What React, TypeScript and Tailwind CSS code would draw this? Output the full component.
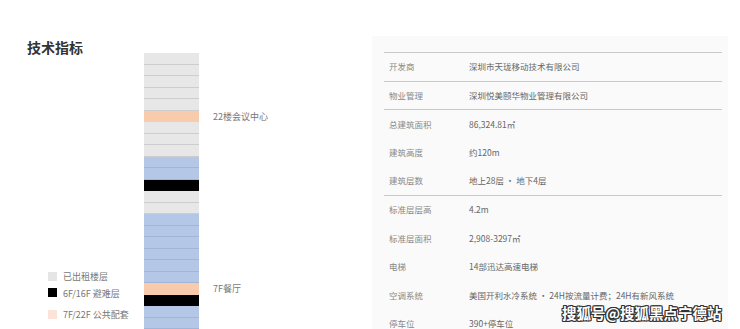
import React from "react"

type Floor = { kind: "grey" | "orange" | "blue" | "black"; label?: string }

const floors: Floor[] = [
  { kind: "grey" },
  { kind: "grey" },
  { kind: "grey" },
  { kind: "grey" },
  { kind: "grey" },
  { kind: "orange", label: "22楼会议中心" },
  { kind: "grey" },
  { kind: "grey" },
  { kind: "grey" },
  { kind: "blue" },
  { kind: "blue" },
  { kind: "black" },
  { kind: "grey" },
  { kind: "grey" },
  { kind: "blue" },
  { kind: "blue" },
  { kind: "blue" },
  { kind: "blue" },
  { kind: "blue" },
  { kind: "blue" },
  { kind: "orange", label: "7F餐厅" },
  { kind: "black" },
  { kind: "blue" },
  { kind: "blue" },
  { kind: "blue" },
]

const floorStyles = {
  grey: "bg-[#e7e7e7] border-[#cdcdcd]",
  orange: "bg-[#f8cbad] border-[#f8cbad]",
  blue: "bg-[#b4c7e7] border-[#a2b5d6]",
  black: "bg-black border-black",
}

const specs = [
  { label: "开发商", value: "深圳市天珑移动技术有限公司", line: true },
  { label: "物业管理", value: "深圳悦美颐华物业管理有限公司", line: true },
  { label: "总建筑面积", value: "86,324.81㎡" },
  { label: "建筑高度", value: "约120m" },
  { label: "建筑层数", value: "地上28层 · 地下4层", line: true },
  { label: "标准层层高", value: "4.2m" },
  { label: "标准层面积", value: "2,908-3297㎡" },
  { label: "电梯", value: "14部迅达高速电梯" },
  { label: "空调系统", value: "美国开利水冷系统 · 24H按流量计费；24H有新风系统" },
  { label: "停车位", value: "390+停车位" },
]

export default function App() {
  return (
    <div
      className="relative flex w-[740px] h-[329px] overflow-hidden bg-white"
      style={{ fontFamily: '"Noto Sans CJK SC", "Noto Sans", sans-serif' }}
    >
      {/* left: diagram */}
      <div className="flex w-[372px] shrink-0">
        <div className="flex w-[144px] shrink-0 flex-col pl-[27px] pt-[37px]">
          <h2 className="text-[14px] font-bold leading-[20px] text-[#333]">技术指标</h2>
          <div className="mt-auto mb-[8.5px] flex flex-col pl-[21px]">
            <div className="flex h-[12px] items-center gap-[6px]">
              <span className="h-[9px] w-[9px] bg-[#e5e5e5]" />
              <span className="text-[9px] leading-[12px] text-[#777]">已出租楼层</span>
            </div>
            <div className="mt-[4px] flex h-[12px] items-center gap-[6px]">
              <span className="h-[9px] w-[9px] bg-black" />
              <span className="mt-[3px] text-[9px] leading-[12px] text-[#777]">6F/16F 避难层</span>
            </div>
            <div className="mt-[10px] flex h-[12px] items-center gap-[6px]">
              <span className="h-[9px] w-[9px] bg-[#fbe4d7]" />
              <span className="text-[9px] leading-[12px] text-[#777]">7F/22F 公共配套</span>
            </div>
          </div>
        </div>
        <div className="flex flex-col pt-[53px]">
          {floors.map((f, i) => (
            <div key={i} className="flex h-[11.5px] shrink-0 items-center">
              <div className={`h-full w-[55px] border-b ${floorStyles[f.kind]}`} />
              {f.label && (
                <span className="ml-[14px] whitespace-nowrap text-[9px] leading-[11px] text-[#777]">
                  {f.label}
                </span>
              )}
            </div>
          ))}
        </div>
      </div>

      {/* right: spec table */}
      <div className="mt-[36px] w-[356px] shrink-0 bg-[#fafafa] pl-[12px] pr-[6px] pt-[16px]">
        <div className="border-t border-[#c9c9c9]">
          {specs.map((s) => (
            <div
              key={s.label}
              className={`flex h-[28.5px] items-center pl-[5px] ${s.line ? "border-b border-[#c9c9c9]" : ""}`}
            >
              <span className="w-[80px] shrink-0 text-[8.5px] text-[#888]">{s.label}</span>
              <span className="whitespace-nowrap text-[8.5px] text-[#666]">{s.value}</span>
            </div>
          ))}
        </div>
      </div>

      {/* watermark */}
      <div
        className="absolute left-[562px] top-[303px] whitespace-nowrap text-[14.5px] font-bold leading-[20px] text-white"
        style={{
          textShadow:
            "1px 0 0 #333, -1px 0 0 #333, 0 1px 0 #333, 0 -1px 0 #333, 1px 1px 0 #333, -1px -1px 0 #333, 1px -1px 0 #333, -1px 1px 0 #333",
        }}
      >
        搜狐号@搜狐黑点宁德站
      </div>
    </div>
  )
}
